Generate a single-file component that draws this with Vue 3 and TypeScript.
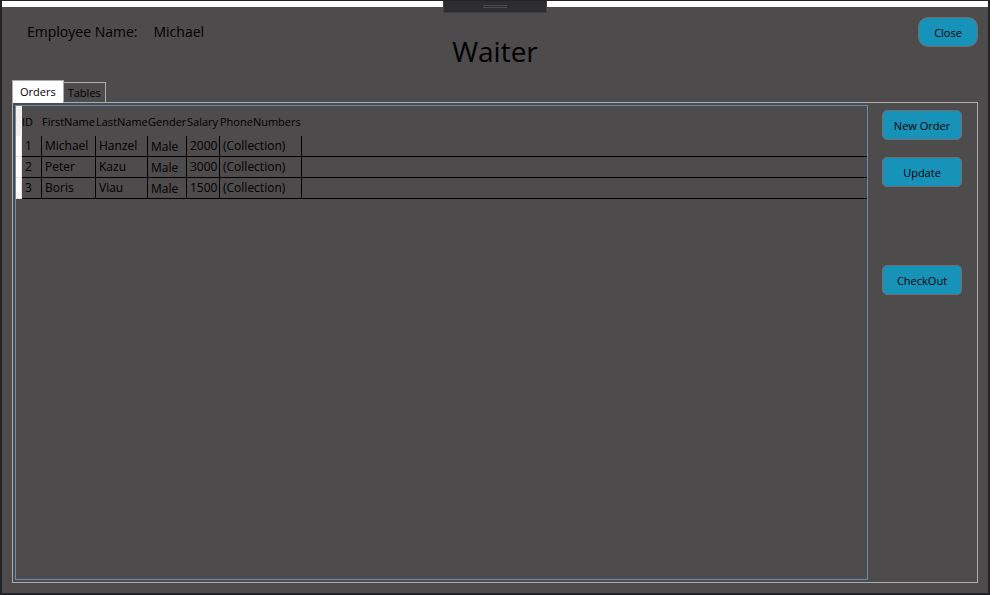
<script setup lang="ts">
import { ref } from 'vue'

interface Employee {
  id: number
  firstName: string
  lastName: string
  gender: string
  salary: number
  phoneNumbers: string
}

type TabName = 'Orders' | 'Tables'

const tabs: TabName[] = ['Orders', 'Tables']
const activeTab = ref<TabName>('Orders')
const employeeName = 'Michael'

const employees: Employee[] = [
  { id: 1, firstName: 'Michael', lastName: 'Hanzel', gender: 'Male', salary: 2000, phoneNumbers: '(Collection)' },
  { id: 2, firstName: 'Peter', lastName: 'Kazu', gender: 'Male', salary: 3000, phoneNumbers: '(Collection)' },
  { id: 3, firstName: 'Boris', lastName: 'Viau', gender: 'Male', salary: 1500, phoneNumbers: '(Collection)' },
]
</script>

<template>
  <div class="window">
    <div class="titlebar">
      <div class="grip"><span class="grip-lines"></span></div>
    </div>
    <main class="content">
      <header class="top">
        <p class="employee"><span>Employee Name:</span><span>{{ employeeName }}</span></p>
        <h1 class="title">Waiter</h1>
        <button type="button" class="action close">Close</button>
      </header>

      <div class="tabs" role="tablist">
        <button
          v-for="tab in tabs"
          :key="tab"
          type="button"
          role="tab"
          class="tab"
          :class="{ active: tab === activeTab }"
          :aria-selected="tab === activeTab"
          @click="activeTab = tab"
        >{{ tab }}</button>
      </div>

      <section class="panel" role="tabpanel">
        <div class="grid">
          <table v-if="activeTab === 'Orders'" class="table">
            <colgroup>
              <col class="w-marker" /><col class="w-id" /><col class="w-first" /><col class="w-last" />
              <col class="w-gender" /><col class="w-salary" /><col class="w-phone" /><col />
            </colgroup>
            <thead>
              <tr>
                <td class="corner"></td>
                <th scope="col">ID</th>
                <th scope="col">FirstName</th>
                <th scope="col">LastName</th>
                <th scope="col">Gender</th>
                <th scope="col">Salary</th>
                <th scope="col">PhoneNumbers</th>
                <td></td>
              </tr>
            </thead>
            <tbody>
              <tr v-for="employee in employees" :key="employee.id">
                <td class="marker"></td>
                <td class="cell">{{ employee.id }}</td>
                <td class="cell">{{ employee.firstName }}</td>
                <td class="cell">{{ employee.lastName }}</td>
                <td class="cell choice">{{ employee.gender }}</td>
                <td class="cell">{{ employee.salary }}</td>
                <td class="cell">{{ employee.phoneNumbers }}</td>
                <td class="rest"></td>
              </tr>
            </tbody>
          </table>
        </div>
        <div class="actions">
          <button type="button" class="action">New Order</button>
          <button type="button" class="action">Update</button>
          <button type="button" class="action checkout">CheckOut</button>
        </div>
      </section>
    </main>
  </div>
</template>

<style>
body {
  background: #fff;
}
</style>

<style scoped>
.window,
.window * {
  box-sizing: border-box;
}

.window {
  display: flex;
  flex-direction: column;
  min-height: 100vh;
  margin-right: 2px;
  border: 2px solid #232224;
  border-top-width: 1px;
  background: #4d4b4b;
  color: #000;
  font-family: "Segoe UI", "Open Sans", "Noto Sans", sans-serif;
  font-size: 11px;
  line-height: 16px;
}

.titlebar {
  display: flex;
  justify-content: center;
  height: 6px;
  background: #fff;
}

.grip {
  display: flex;
  justify-content: center;
  z-index: 1;
  width: 104px;
  height: 12px;
  padding-top: 4px;
  border: 1px solid #3f3f44;
  border-top: 0;
  background: #2d2d30;
}

.grip-lines {
  width: 24px;
  height: 3px;
  border: solid #4b4b50;
  border-width: 1px 0;
}

.content {
  display: flex;
  flex: 1;
  flex-direction: column;
  padding: 10px;
}

.top {
  display: grid;
  grid-template-columns: 1fr auto 1fr;
  align-items: start;
  height: 63px;
}

.employee {
  display: flex;
  gap: 16px;
  margin: 0;
  padding: 5px 0 0 15px;
  font-size: 14px;
  line-height: 20px;
}

.title {
  margin: 0;
  padding-top: 14px;
  font-size: 28px;
  font-weight: 400;
  line-height: 40px;
}

.action {
  width: 80px;
  height: 30px;
  padding: 2px 0 0;
  border: 1px solid #707070;
  border-radius: 5px;
  background: #1792b9;
  color: #000;
  font: inherit;
}

.close {
  justify-self: end;
  width: 60px;
  border-radius: 10px;
}

.tabs {
  display: flex;
  align-items: flex-end;
  height: 22px;
}

.tab {
  height: 20px;
  padding: 1px 4px 0;
  border: 1px solid #acacac;
  border-bottom: 0;
  border-left: 0;
  background: transparent;
  color: #000;
  font: inherit;
}

.tab.active {
  z-index: 1;
  height: 23px;
  margin-bottom: -1px;
  padding: 0 7px;
  border-left: 1px solid #acacac;
  background: #fff;
}

.panel {
  display: flex;
  flex: 1;
  gap: 14px;
  padding: 2px 15px 2px 2px;
  border: 1px solid #acacac;
}

.grid {
  flex: 1;
  border: 1px solid #688caf;
}

.table {
  width: 100%;
  border-collapse: separate;
  border-spacing: 0;
  table-layout: fixed;
}

.table th,
.table td {
  padding: 0;
  white-space: nowrap;
}

.table th {
  padding-top: 2px;
  font-weight: 400;
  text-align: left;
}

.table thead tr {
  height: 30px;
}

.table tbody tr {
  height: 21px;
}

.table .corner {
  background: #f0f0f0;
}

.table .marker {
  border-right: 1px solid #e4e4e4;
  border-bottom: 1px solid #e4e4e4;
  background: #fff;
}

.table .cell {
  padding: 0 0 0 3px;
  border-right: 1px solid #000;
  border-bottom: 1px solid #000;
  font-size: 12px;
}

.table .choice {
  padding-top: 2px;
}

.table .rest {
  border-bottom: 1px solid #000;
}

.w-marker { width: 6px; }
.w-id { width: 20px; }
.w-first { width: 54px; }
.w-last { width: 52px; }
.w-gender { width: 39px; }
.w-salary { width: 33px; }
.w-phone { width: 82px; }

.actions {
  display: flex;
  flex-direction: column;
  gap: 17px;
  padding-top: 5px;
}

.checkout {
  margin-top: 61px;
}
</style>
